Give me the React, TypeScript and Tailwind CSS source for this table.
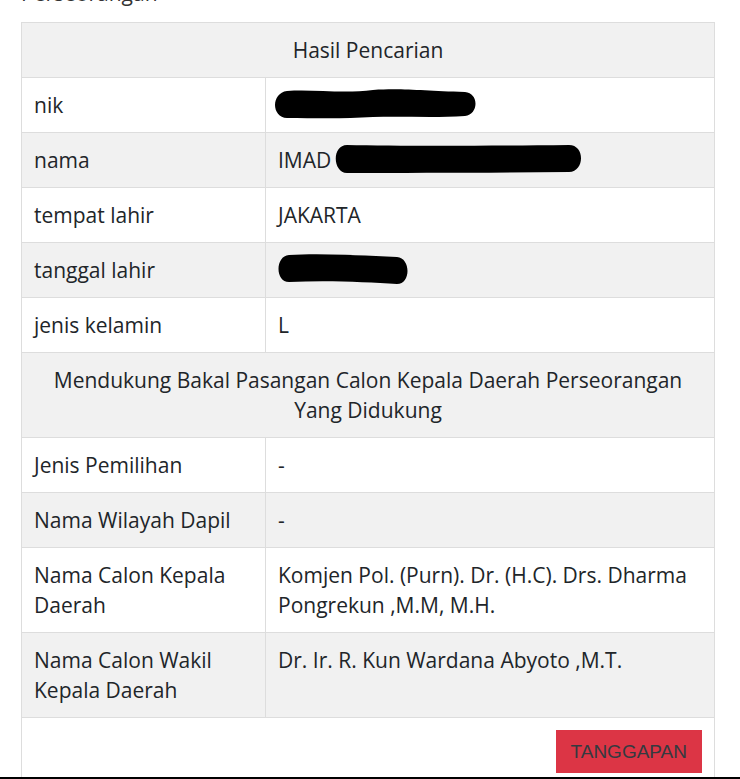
import React from "react"

const rows = [
  { label: "nik", value: "", redact: "nik", shade: false },
  { label: "nama", value: "IMAD", redact: "nama", shade: true },
  { label: "tempat lahir", value: "JAKARTA", redact: "", shade: false },
  { label: "tanggal lahir", value: "", redact: "tgl", shade: true },
  { label: "jenis kelamin", value: "L", redact: "", shade: false },
]

const calonRows = [
  { label: "Jenis Pemilihan", value: "-", shade: false },
  { label: "Nama Wilayah Dapil", value: "-", shade: true },
  {
    label: "Nama Calon Kepala Daerah",
    value: "Komjen Pol. (Purn). Dr. (H.C). Drs. Dharma Pongrekun ,M.M, M.H.",
    shade: false,
  },
  {
    label: "Nama Calon Wakil Kepala Daerah",
    value: "Dr. Ir. R. Kun Wardana Abyoto ,M.T.",
    shade: true,
  },
]

// marker scribbles covering personal data
function Redaction({ kind }: { kind: string }) {
  if (kind === "nik") {
    return (
      <svg width="206" height="32" viewBox="0 0 206 32" className="absolute left-[-5px] top-[-2px]">
        <path
          d="M14 3 C40 1 70 6 100 2 C130 0 150 3 192 4 C206 5 206 26 192 28 C160 30 130 28 100 29 C70 31 40 30 14 30 C-2 29 -2 5 14 3 Z"
          fill="#000"
        />
      </svg>
    )
  }
  if (kind === "nama") {
    return (
      <svg width="250" height="32" viewBox="0 0 250 32" className="absolute left-[57px] top-[-2px]">
        <path
          d="M12 2 C60 3 140 3 234 2 C250 2 250 28 234 29 C160 30 80 30 12 30 C-3 29 -3 2 12 2 Z"
          fill="#000"
        />
      </svg>
    )
  }
  return (
    <svg width="133" height="34" viewBox="0 0 133 34" className="absolute left-[-1px] top-[-3px]">
      <path
        d="M12 3 C40 1 80 3 120 5 C134 6 134 32 120 32 C90 30 50 28 12 30 C-2 30 -2 4 12 3 Z"
        fill="#000"
      />
    </svg>
  )
}

export default function App() {
  const cell = "border border-[#dddddd] px-3 py-3 align-top"

  return (
    <div
      className="relative h-[779px] overflow-hidden bg-white text-[21px] leading-[30px] text-[#212529]"
      style={{ fontFamily: '"Open Sans", "Noto Sans", sans-serif' }}
    >
      <div className="pl-[21px]">
        <p className="mt-[-22px] h-[44px] text-[#333]">Perseorangan</p>

        <table className="w-[694px] table-fixed border-collapse">
          <colgroup>
            <col className="w-[244px]" />
            <col />
          </colgroup>
          <tbody>
            <tr className="bg-[#f1f1f1]">
              <td colSpan={2} className={`${cell} text-center`}>
                Hasil Pencarian
              </td>
            </tr>
            {rows.map((r) => (
              <tr key={r.label} className={r.shade ? "bg-[#f1f1f1]" : "bg-white"}>
                <td className={cell}>{r.label}</td>
                <td className={cell}>
                  <div className="relative h-[30px]">
                    {r.value}
                    {r.redact && <Redaction kind={r.redact} />}
                  </div>
                </td>
              </tr>
            ))}
            <tr className="bg-[#f1f1f1]">
              <td colSpan={2} className={`${cell} px-6 text-center`}>
                Mendukung Bakal Pasangan Calon Kepala Daerah Perseorangan Yang Didukung
              </td>
            </tr>
            {calonRows.map((r) => (
              <tr key={r.label} className={r.shade ? "bg-[#f1f1f1]" : "bg-white"}>
                <td className={cell}>{r.label}</td>
                <td className={cell}>{r.value}</td>
              </tr>
            ))}
            <tr className="bg-white">
              <td colSpan={2} className={`${cell} text-right`}>
                <button
                  className="h-[43px] bg-[#dc3545] px-[15px] text-[19px] leading-[43px] text-[#343a40]"
                  style={{ fontFamily: '"Liberation Sans", Arial, sans-serif' }}
                >
                  TANGGAPAN
                </button>
                <div className="h-[40px]" />
              </td>
            </tr>
          </tbody>
        </table>
      </div>
      <div className="absolute bottom-0 left-0 h-[2px] w-full bg-black" />
    </div>
  )
}
